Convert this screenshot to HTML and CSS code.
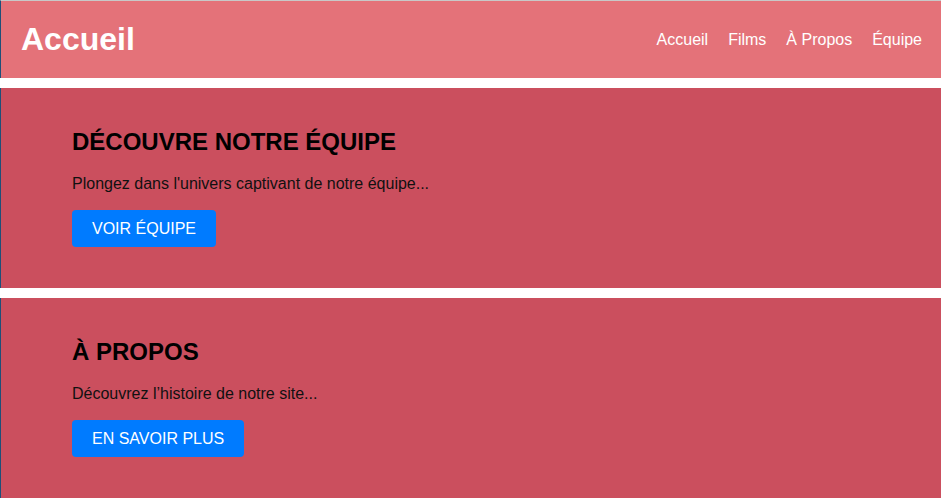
FILE: index.html
```html
<!DOCTYPE html>
<html lang="fr">
<head>
<meta charset="utf-8">
<title>Accueil</title>
<link rel="stylesheet" href="styles.css">
</head>
<body>
<header class="site-header">
  <h1 class="site-title">Accueil</h1>
  <nav class="site-nav">
    <a href="#">Accueil</a>
    <a href="#">Films</a>
    <a href="#">À Propos</a>
    <a href="#">Équipe</a>
  </nav>
</header>
<section class="panel">
  <h2 class="panel-title">DÉCOUVRE NOTRE ÉQUIPE</h2>
  <p class="panel-text">Plongez dans l'univers captivant de notre équipe...</p>
  <a class="btn" href="#">VOIR ÉQUIPE</a>
</section>
<section class="panel">
  <h2 class="panel-title">À PROPOS</h2>
  <p class="panel-text">Découvrez l’histoire de notre site...</p>
  <a class="btn" href="#">EN SAVOIR PLUS</a>
</section>
</body>
</html>
```
FILE: styles.css
```css
html, body {
  margin: 0;
  padding: 0;
  background: #ffffff;
  font-family: "Liberation Sans", Arial, sans-serif;
}

.site-header {
  display: flex;
  align-items: center;
  justify-content: space-between;
  background: #e47279;
  border-top: 1px solid #c8c8c8;
  border-left: 1px solid #1e4f78;
  padding: 20px 19px 20px 20px;
  margin-bottom: 10px;
}

.site-title {
  margin: 0;
  color: #ffffff;
  font-size: 32px;
  font-weight: bold;
  line-height: 37px;
}

.site-nav {
  display: flex;
  gap: 20px;
}

.site-nav a {
  color: #ffffff;
  text-decoration: none;
  font-size: 16px;
  line-height: 18px;
}

.panel {
  background: #cb4f5e;
  border-left: 1px solid #1e4f78;
  padding: 40px 71px 41px;
  margin-bottom: 10px;
}

.panel-title {
  margin: 0 0 19px;
  color: #000000;
  font-size: 24px;
  font-weight: bold;
  line-height: 28px;
}

.panel-text {
  margin: 0 0 17px;
  color: #111111;
  font-size: 16px;
  line-height: 18px;
}

.btn {
  display: inline-block;
  background: #007bff;
  color: #ffffff;
  text-decoration: none;
  font-size: 16px;
  line-height: 17px;
  padding: 10px 20px;
  border-radius: 4px;
}
```
